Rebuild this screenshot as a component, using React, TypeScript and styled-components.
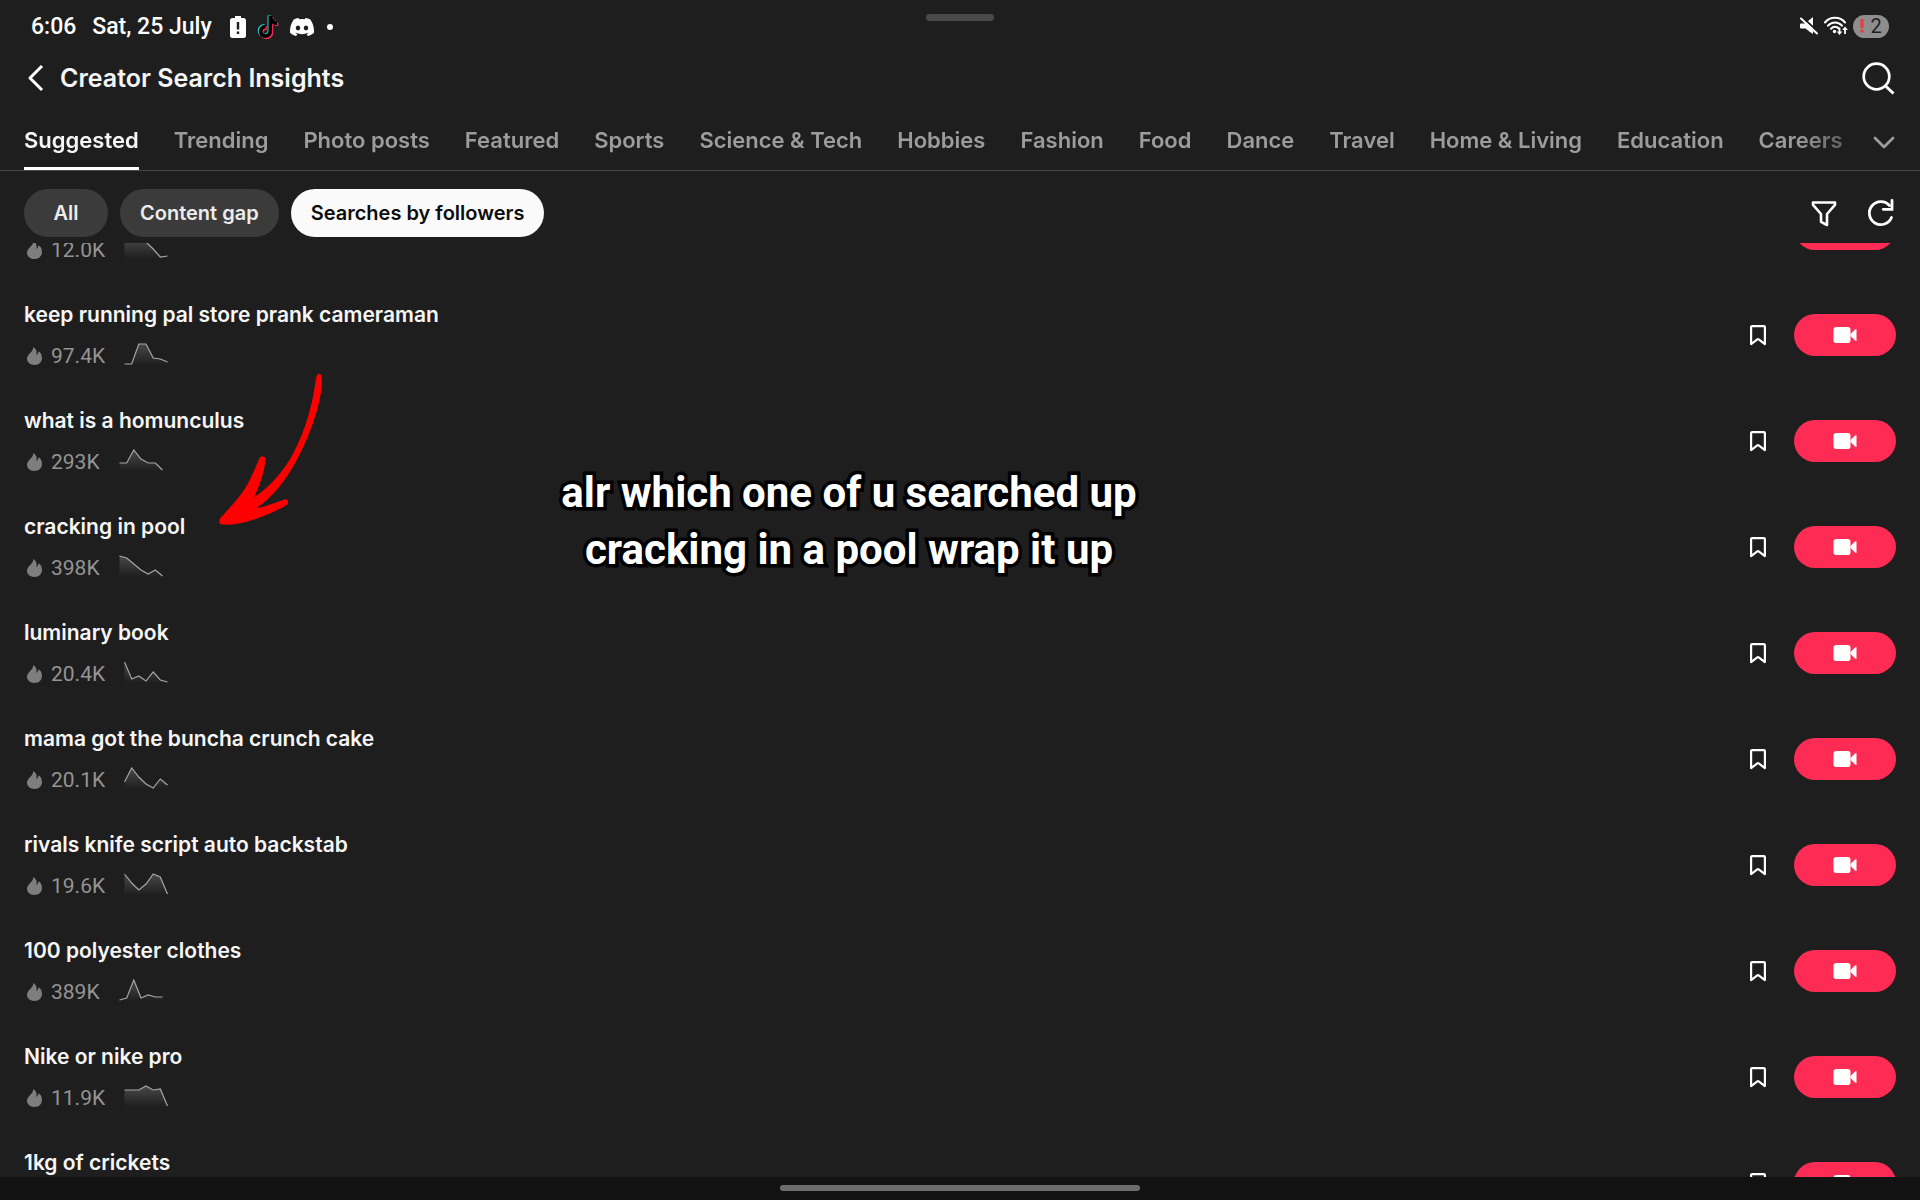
import React, { useLayoutEffect, useRef, useState } from 'react';
import styled, { createGlobalStyle } from 'styled-components';

const color = {
  page: '#1e1e1e',
  text: '#f6f6f6',
  muted: '#9c9c9c',
  faint: '#949494',
  chip: '#3b3b3b',
  line: '#484848',
  accent: '#fe2c55',
};

const GlobalStyle = createGlobalStyle`
  * { box-sizing: border-box; }
  body {
    margin: 0;
    background: ${color.page};
    color: ${color.text};
    font-family: Inter, "Liberation Sans", sans-serif;
  }
  button {
    padding: 0;
    border: 0;
    background: none;
    color: inherit;
    font: inherit;
    cursor: pointer;
  }
  svg { display: block; flex: none; }
`;

const Screen = styled.div`
  position: relative;
  display: flex;
  flex-direction: column;
  height: 100vh;
  overflow: hidden;
`;

const StatusBar = styled.div`
  display: grid;
  grid-template-columns: 1fr auto 1fr;
  align-items: center;
  height: 52px;
  flex: none;
  padding: 0 31px;
  font: 500 23px/28px Roboto, "Liberation Sans", sans-serif;
  color: #fff;
`;

const StatusGroup = styled.div<{ $end?: boolean }>`
  display: flex;
  align-items: center;
  justify-content: ${(p) => (p.$end ? 'flex-end' : 'flex-start')};
  gap: ${(p) => (p.$end ? 5 : 10)}px;
  padding-top: ${(p) => (p.$end ? 0 : 2)}px;
`;

const Clock = styled.span`
  margin-right: 6px;
`;

const DateText = styled.span`
  margin-right: 8px;
`;

const MoreDot = styled.span`
  width: 6px;
  height: 6px;
  margin-left: 3px;
  border-radius: 3px;
  background: #fff;
`;

const WindowHandle = styled.div`
  align-self: start;
  width: 68px;
  height: 7px;
  margin-top: 14px;
  border-radius: 4px;
  background: #4a4a4a;
`;

const BatteryPill = styled.span`
  display: flex;
  align-items: center;
  justify-content: center;
  gap: 6px;
  width: 36px;
  height: 23px;
  border-radius: 12px;
  background: #8e8e8e;
  color: #1e1e1e;
  font-size: 20px;
  font-weight: 400;
`;

const TitleBar = styled.header`
  display: flex;
  align-items: center;
  height: 52px;
  flex: none;
  padding: 0 24px;
`;

const Title = styled.h1`
  flex: 1;
  margin: 0 0 0 11px;
  font-size: 25px;
  line-height: 32px;
  font-weight: 600;
`;

const TabBar = styled.div`
  display: flex;
  align-items: center;
  flex: none;
  padding: 0 24px;
  border-bottom: 1px solid ${color.line};
`;

const Tabs = styled.nav`
  display: flex;
  flex: 1;
  gap: 35px;
  min-width: 0;
  margin-right: 16px;
  overflow: hidden;
  mask-image: linear-gradient(to right, #000 calc(100% - 60px), rgba(0, 0, 0, 0.4));
`;

const Tab = styled.button<{ $active: boolean }>`
  height: 66px;
  padding-top: 9px;
  border-bottom: 3px solid ${(p) => (p.$active ? '#fff' : 'transparent')};
  color: ${(p) => (p.$active ? color.text : color.muted)};
  font-size: 22px;
  line-height: 28px;
  font-weight: 600;
  white-space: nowrap;
`;

const FilterBar = styled.div`
  display: flex;
  align-items: center;
  flex: none;
  gap: 12px;
  padding: 18px 24px 6px;
`;

const Chip = styled.button<{ $active: boolean }>`
  min-width: 84px;
  height: 48px;
  padding: 0 20px;
  border-radius: 24px;
  background: ${(p) => (p.$active ? '#fafafa' : color.chip)};
  color: ${(p) => (p.$active ? '#0c0c0c' : '#ececec')};
  font-size: 20px;
  line-height: 28px;
  font-weight: 600;
  white-space: nowrap;
`;

const FilterActions = styled.div`
  display: flex;
  gap: 24px;
  margin-left: auto;
`;

const List = styled.ul`
  flex: 1;
  min-height: 0;
  margin: 0;
  padding: 0 24px;
  overflow-y: auto;
  scrollbar-width: none;
  list-style: none;
`;

const Row = styled.li`
  display: flex;
  align-items: center;
  gap: 22px;
  height: 106px;
`;

const Topic = styled.div`
  flex: 1;
  min-width: 0;
`;

const TopicTitle = styled.h2`
  height: 30px;
  margin: 0 0 12px;
  font-size: 21px;
  line-height: 30px;
  font-weight: 600;
`;

const Meta = styled.div`
  display: flex;
  align-items: center;
  gap: 7px;
  height: 28px;
  color: ${color.faint};
  font: 400 21px/28px Roboto, "Liberation Sans", sans-serif;
`;

const SparkSvg = styled.svg`
  margin: 0 0 4px 12px;
`;

const IconButton = styled.button`
  display: flex;
  align-items: center;
  justify-content: center;
  color: #fff;
`;

const ExpandButton = styled(IconButton)`
  padding-top: 9px;
`;

const RecordButton = styled(IconButton)`
  width: 102px;
  height: 42px;
  border-radius: 21px;
  background: ${color.accent};
`;

const NavBar = styled.div`
  display: flex;
  justify-content: center;
  flex: none;
  height: 23px;
  padding-top: 8px;
  background: #121212;
`;

const NavPill = styled.div`
  width: 360px;
  height: 6px;
  border-radius: 3px;
  background: #6c6c6c;
`;

const Caption = styled.p`
  position: absolute;
  top: 464px;
  left: 849px;
  margin: 0;
  transform: translateX(-50%);
  color: #fff;
  font: 700 42px/57px Roboto, "Liberation Sans", sans-serif;
  text-align: center;
  white-space: nowrap;
  -webkit-text-stroke: 7px #000;
  paint-order: stroke fill;
  pointer-events: none;
`;

const ArrowSvg = styled.svg`
  position: absolute;
  top: 372px;
  left: 217px;
  pointer-events: none;
`;

const BatteryAlertIcon = () => (
  <svg width="16" height="22" viewBox="0 0 16 22" aria-hidden="true">
    <path fill="#fff" d="M5 0h6v2h2.500a2.500 2.500 0 0 1 2.500 2.500v15a2.500 2.500 0 0 1-2.500 2.500h-11a2.500 2.500 0 0 1-2.500-2.500v-15a2.500 2.500 0 0 1 2.500-2.500H5z" />
    <path stroke="#1e1e1e" strokeWidth="2.400" d="M8 6v7.500M8 15.500v2.500" />
  </svg>
);

const notePath =
  'M12.500 2h3.600c.3 2.900 2.100 4.900 5 5.200v3.700c-1.900 0-3.600-.5-5-1.500v7.600c0 4-3 6.900-6.700 6.900S2.800 21 2.800 17.300s3-6.700 6.800-6.600v3.800c-1.700-.2-3.100 1.100-3.100 2.800s1.300 2.900 2.900 2.900 3.100-1.200 3.100-3.200z';

const TikTokIcon = () => (
  <svg width="24" height="27" viewBox="0 0 24 27" aria-hidden="true">
    <path fill="#25f4ee" opacity="0.85" d={notePath} transform="translate(-1 -.6)" />
    <path fill="#fe2c55" d={notePath} transform="translate(1.200 1.200)" />
    <path fill="#000" d={notePath} />
  </svg>
);

const DiscordIcon = () => (
  <svg width="24" height="18" viewBox="0 0 24 18" aria-hidden="true">
    <path
      fill="#fff"
      d="M20.300 1.500A19.800 19.800 0 0 0 15.400 0l-.7 1.300a18.300 18.300 0 0 0-5.400 0L8.600 0a19.700 19.700 0 0 0-4.900 1.500C.6 6.100-.3 10.700.1 15.100a20 20 0 0 0 6 3l1.300-2-1.900-.9.400-.4a14.200 14.200 0 0 0 12.200 0l.4.400-1.900.9 1.300 2a19.900 19.900 0 0 0 6-3c.5-5.100-.8-9.600-3.600-13.600zM8 12.300c-1.200 0-2.200-1.100-2.200-2.400S6.800 7.500 8 7.500s2.200 1.100 2.200 2.400-1 2.400-2.200 2.400zm8 0c-1.200 0-2.200-1.100-2.200-2.400s1-2.400 2.200-2.400 2.200 1.100 2.200 2.400-1 2.400-2.200 2.400z"
    />
  </svg>
);

const MuteIcon = () => (
  <svg width="20" height="18" viewBox="0 0 20 18" aria-hidden="true">
    <path fill="#fff" d="M2 6.500h4L14 0v17l-3-2-4.500-3.500H2a1 1 0 0 1-1-1v-3a1 1 0 0 1 1-1z" />
    <path stroke="#1e1e1e" strokeWidth="2" d="M3.500.5 20 15.500" />
    <path stroke="#fff" strokeWidth="2" strokeLinecap="round" d="M2 1.500 18 16.500" />
  </svg>
);

const WifiIcon = () => (
  <svg width="24" height="20" viewBox="0 0 24 20" aria-hidden="true">
    <g fill="none" stroke="#fff" strokeWidth="2" strokeLinecap="round">
      <path d="M1 6.500C6 .3 16 .3 21 6.500" />
      <path d="M4 9.700c3.700-4.300 10.300-4.300 14 0" />
      <path d="M7 12.700c2.300-2.500 5.700-2.500 8 0" />
    </g>
    <circle cx="10.500" cy="15.500" r="1.700" fill="#fff" />
    <path stroke="#fff" strokeWidth="1.800" d="M15.500 11.500v5.500M21 18v-5.500" />
    <path fill="#fff" d="M12.700 15.500h5.600l-2.800 3.500zM18.200 14 21 10.500l2.900 3.500z" />
  </svg>
);

const BatteryWarning = () => (
  <svg width="4" height="14" viewBox="0 0 4 14" aria-hidden="true">
    <path stroke="#f0383c" strokeWidth="3" d="M2 0v9M2 10.500v3" />
  </svg>
);

const BackIcon = () => (
  <svg width="25" height="30" viewBox="0 0 25 30" fill="none" aria-hidden="true">
    <path stroke="#fff" strokeWidth="3" strokeLinejoin="round" d="M18 3 6 15l12 12" />
  </svg>
);

const SearchIcon = () => (
  <svg width="36" height="36" viewBox="0 0 36 36" fill="none" aria-hidden="true">
    <circle cx="16.500" cy="16.500" r="12.800" stroke="#fff" strokeWidth="2.700" />
    <path stroke="#fff" strokeWidth="3" d="m25.500 26 8 7.500" />
  </svg>
);

const ChevronIcon = () => (
  <svg width="24" height="24" viewBox="0 0 24 24" fill="none" aria-hidden="true">
    <path stroke={color.muted} strokeWidth="2.800" strokeLinecap="round" strokeLinejoin="round" d="m3 8 9 9 9-9" />
  </svg>
);

const FunnelIcon = () => (
  <svg width="32" height="32" viewBox="0 0 32 32" fill="none" aria-hidden="true">
    <path
      stroke="#fff"
      strokeWidth="2.600"
      strokeLinejoin="round"
      d="M5 5.500h22v2.300l-8 9.200v11l-6-3.200V17L5 7.800z"
    />
  </svg>
);

const RefreshIcon = () => (
  <svg width="32" height="32" viewBox="0 0 32 32" fill="none" aria-hidden="true">
    <g stroke="#fff" strokeWidth="2.800" strokeLinecap="round">
      <path d="M27.500 20.500A11.500 11.500 0 1 1 25.500 8.500" />
      <path d="M28 3.500v8.800h-8.800" />
    </g>
  </svg>
);

const FlameIcon = () => (
  <svg width="20" height="20" viewBox="0 0 20 20" aria-hidden="true">
    <path
      fill="#7e7e7e"
      d="M9.300 1c1.900 1.100 3.200 2.900 3.300 5.300.1 1 .1 1.900-.1 3 .9-.9 1.700-2.300 2.100-4C17 6.800 18 9.200 18 12c0 4.200-3.200 7-7.500 7S3 16.400 3 12.800c0-2.200 1.200-3.800 3-5.600C7.900 5.300 9.200 3.800 9.300 1z"
    />
  </svg>
);

const BookmarkIcon = () => (
  <svg width="28" height="28" viewBox="0 0 28 28" fill="none" aria-hidden="true">
    <path
      stroke="#fff"
      strokeWidth="2.200"
      strokeLinejoin="round"
      d="M7.100 6.100a1 1 0 0 1 1-1h11.800a1 1 0 0 1 1 1v17l-6.200-4.800a1.200 1.200 0 0 0-1.400 0l-6.200 4.800z"
    />
  </svg>
);

const VideoIcon = () => (
  <svg width="24" height="16" viewBox="0 0 24 16" aria-hidden="true">
    <rect x="0.500" width="17" height="16" rx="2.800" fill="#fff" />
    <path fill="#fff" d="M17.500 7 22.300 2.200q1.200-.7 1.200.6v10.400q0 1.300-1.200.6L17.500 9z" />
  </svg>
);

function Sparkline({ id, values }: { id: string; values: number[] }) {
  const step = 43 / (values.length - 1);
  const points = values.map((v, i) => `${(0.5 + i * step).toFixed(1)},${v}`).join(' ');
  return (
    <SparkSvg width="44" height="22" viewBox="0 0 44 22" fill="none" aria-hidden="true">
      <defs>
        <linearGradient id={id} x1="0" y1="0" x2="0" y2="22" gradientUnits="userSpaceOnUse">
          <stop offset="0" stopColor="#fff" stopOpacity="0.2" />
          <stop offset="1" stopColor="#fff" stopOpacity="0" />
        </linearGradient>
      </defs>
      <polygon points={`0.5,22 ${points} 43.5,22`} fill={`url(#${id})`} />
      <polyline points={points} stroke="#a6a6a6" strokeWidth="1.200" />
    </SparkSvg>
  );
}

const tabs = [
  'Suggested', 'Trending', 'Photo posts', 'Featured', 'Sports', 'Science & Tech', 'Hobbies',
  'Fashion', 'Food', 'Dance', 'Travel', 'Home & Living', 'Education', 'Careers',
];

const chips = ['All', 'Content gap', 'Searches by followers'];

type TopicData = { title?: string; count?: string; trend?: number[] };

const topics: TopicData[] = [
  { count: '12.0K', trend: [1, 1, 2, 5, 12, 20, 19] },
  { title: 'keep running pal store prank cameraman', count: '97.4K', trend: [21, 21, 1, 1, 15, 16, 19] },
  { title: 'what is a homunculus', count: '293K', trend: [14, 14, 1, 10, 14, 14, 21] },
  { title: 'cracking in pool', count: '398K', trend: [1, 3, 9, 15, 19, 15, 21] },
  { title: 'luminary book', count: '20.4K', trend: [1, 18, 15, 20, 11, 19, 21] },
  { title: 'mama got the buncha crunch cake', count: '20.1K', trend: [15, 1, 10, 17, 21, 12, 18] },
  { title: 'rivals knife script auto backstab', count: '19.6K', trend: [1, 10, 17, 11, 1, 4, 21] },
  { title: '100 polyester clothes', count: '389K', trend: [21, 19, 1, 19, 16, 18, 18] },
  { title: 'Nike or nike pro', count: '11.9K', trend: [5, 5, 5, 1, 5, 4, 21] },
  { title: '1kg of crickets' },
];

const INITIAL_SCROLL = 67;

export default function App() {
  const [tab, setTab] = useState('Suggested');
  const [chip, setChip] = useState('Searches by followers');
  const listRef = useRef<HTMLUListElement>(null);

  useLayoutEffect(() => {
    if (listRef.current) listRef.current.scrollTop = INITIAL_SCROLL;
  }, []);

  return (
    <Screen>
      <GlobalStyle />
      <StatusBar>
        <StatusGroup>
          <Clock>6:06</Clock>
          <DateText>Sat, 25 July</DateText>
          <BatteryAlertIcon />
          <TikTokIcon />
          <DiscordIcon />
          <MoreDot />
        </StatusGroup>
        <WindowHandle />
        <StatusGroup $end>
          <MuteIcon />
          <WifiIcon />
          <BatteryPill>
            <BatteryWarning />2
          </BatteryPill>
        </StatusGroup>
      </StatusBar>

      <TitleBar>
        <IconButton aria-label="Back"><BackIcon /></IconButton>
        <Title>Creator Search Insights</Title>
        <IconButton aria-label="Search"><SearchIcon /></IconButton>
      </TitleBar>

      <TabBar>
        <Tabs>
          {tabs.map((name) => (
            <Tab key={name} $active={name === tab} onClick={() => setTab(name)}>{name}</Tab>
          ))}
        </Tabs>
        <ExpandButton aria-label="More categories"><ChevronIcon /></ExpandButton>
      </TabBar>

      <FilterBar>
        {chips.map((name) => (
          <Chip key={name} $active={name === chip} onClick={() => setChip(name)}>{name}</Chip>
        ))}
        <FilterActions>
          <IconButton aria-label="Filter"><FunnelIcon /></IconButton>
          <IconButton aria-label="Refresh"><RefreshIcon /></IconButton>
        </FilterActions>
      </FilterBar>

      <List ref={listRef}>
        {topics.map((topic, i) => (
          <Row key={i}>
            <Topic>
              <TopicTitle>{topic.title}</TopicTitle>
              <Meta>
                {topic.count && <FlameIcon />}
                {topic.count && <span>{topic.count}</span>}
                {topic.trend && <Sparkline id={`trend-${i}`} values={topic.trend} />}
              </Meta>
            </Topic>
            <IconButton aria-label="Save"><BookmarkIcon /></IconButton>
            <RecordButton aria-label="Record"><VideoIcon /></RecordButton>
          </Row>
        ))}
      </List>

      <NavBar><NavPill /></NavBar>

      <ArrowSvg width="107" height="155" viewBox="650 425 321 465" aria-hidden="true">
        <path
          fill="#fe0000"
          d="M957 430C964 432 966 440 964 470C955 560 900 680 862 735C835 775 805 810 768 834C800 828 830 815 855 807C862 806 866 812 862 822C850 832 790 860 740 874C710 882 680 885 662 882C654 880 657 870 660 863C690 830 720 800 740 765C755 738 768 705 778 682C782 677 792 678 795 682C796 710 785 750 762 800C800 775 840 735 870 685C905 625 935 540 946 450C948 438 950 431 957 430Z"
        />
      </ArrowSvg>
      <Caption>
        alr which one of u searched up
        <br />
        cracking in a pool wrap it up
      </Caption>
    </Screen>
  );
}
